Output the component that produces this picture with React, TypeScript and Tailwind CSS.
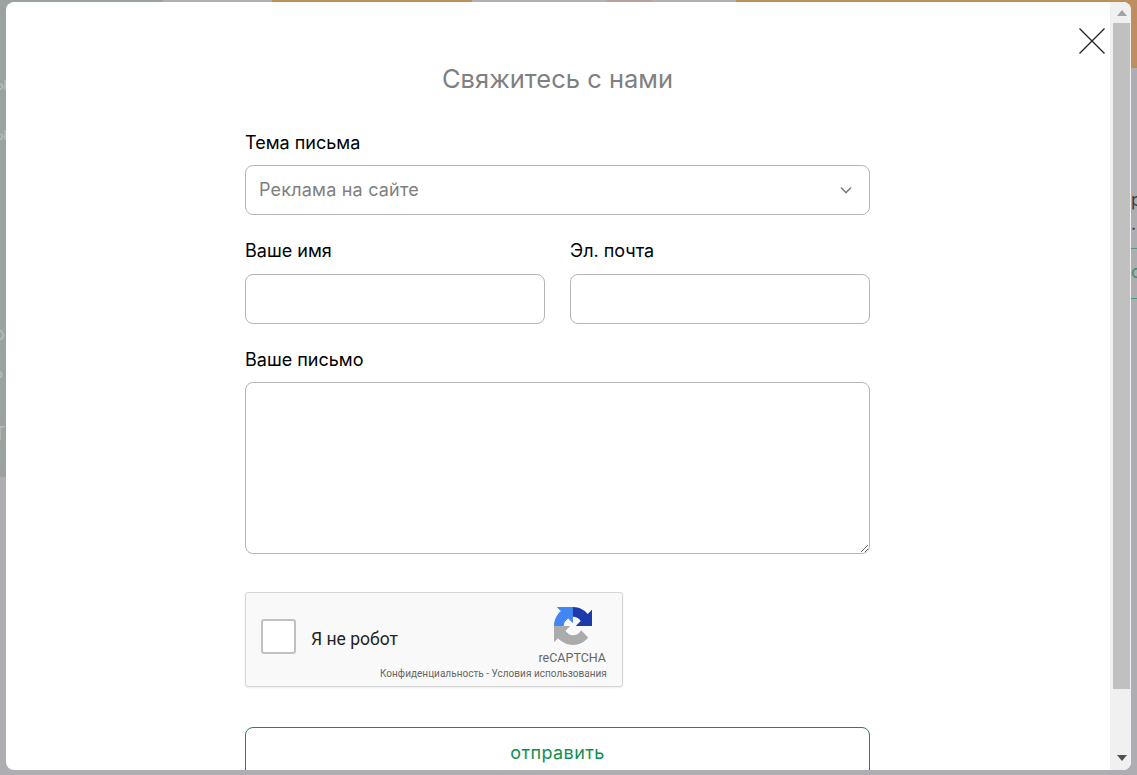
const sans = 'font-["Inter",sans-serif]';

function RecaptchaLogo() {
  return (
    <svg width="38" height="38" viewBox="0 0 64 64">
      <path d="M64 31.955l-.033-1.37V4.687l-7.16 7.16C50.948 4.674 42.033.093 32.05.093c-10.4 0-19.622 4.96-25.458 12.64l11.736 11.86a15.55 15.55 0 0 1 4.754-5.334c2.05-1.6 4.952-2.906 8.968-2.906.485 0 .86.057 1.135.163 4.976.393 9.288 3.14 11.828 7.124l-8.307 8.307 32.3.01" fill="#1c3aa9" />
      <path d="M31.862 0l-1.37.033H4.594l7.16 7.16C4.58 13.052 0 21.967 0 31.95c0 10.4 4.96 19.622 12.64 25.458L24.5 45.672a15.55 15.55 0 0 1-5.334-4.754c-1.6-2.05-2.906-4.952-2.906-8.968 0-.485.057-.86.163-1.135.393-4.976 3.14-9.288 7.124-11.828l8.307 8.307L31.862 0" fill="#4285f4" />
      <path d="M.001 31.95l.033 1.37v25.898l7.16-7.16c5.86 7.173 14.775 11.754 24.757 11.754 10.4 0 19.622-4.96 25.458-12.64l-11.736-11.86a15.55 15.55 0 0 1-4.754 5.334c-2.05 1.6-4.952 2.906-8.968 2.906-.485 0-.86-.057-1.135-.163-4.976-.393-9.288-3.14-11.828-7.124l8.307-8.307-32.3-.01" fill="#ababab" />
    </svg>
  );
}

function Scrollbar() {
  return (
    <div className="flex w-[21px] shrink-0 flex-col items-center bg-[#f0f0f0] pl-[2px]">
      <div className="flex h-[21px] w-full items-center justify-center">
        <svg width="10" height="6" viewBox="0 0 10 6"><path d="M5 0 10 6H0Z" fill="#a3a3a3" /></svg>
      </div>
      <div className="h-[666px] w-[17px] bg-[#c0c0c0]" />
      <div className="flex flex-1 items-start justify-center pt-[66px]">
        <svg width="10" height="6" viewBox="0 0 10 6"><path d="M0 0H10L5 6Z" fill="#505050" /></svg>
      </div>
    </div>
  );
}

export default function App() {
  return (
    <div className={`relative h-[775px] w-[1137px] overflow-hidden bg-[#aeadb1] ${sans}`}>
      {/* dimmed page behind the modal */}
      <div className="h-[477px] bg-[#9aa3a0]">
        <div className="flex h-[68px]">
          <div className="w-[163px] bg-[#9aa3a0]" />
          <div className="w-[109px] bg-[#b3b0b4]" />
          <div className="w-[200px] bg-[#bd8f5f]" />
          <div className="w-[135px] bg-[#b3b0b4]" />
          <div className="w-[45px] bg-[#b8a09c]" />
          <div className="w-[84px] bg-[#b3b0b4]" />
          <div className="flex-1 bg-[#bd8f5f]" />
        </div>
        <div className="flex h-[409px] justify-between">
          <div className="w-[6px] overflow-hidden whitespace-nowrap text-[18px] leading-[24px] text-[#b6bbb9]">
            <div className="mt-[4px] -ml-[6px]">ы</div>
            <div className="mt-[26px] -ml-[6px]">ы</div>
            <div className="mt-[176px] -ml-[6px]">о</div>
            <div className="mt-[21px] -ml-[6px]">?</div>
            <div className="mt-[31px] -ml-[6px]">Т</div>
          </div>
          <div className="w-[6px] overflow-hidden whitespace-nowrap bg-[#aeadb1] pt-[120px] text-[18px] leading-[24px]">
            <div className="text-[#3d3d44]">р</div>
            <div className="text-[#3d3d44]">.</div>
            <div className="mt-[12px] h-px bg-[#4f9b7f]" />
            <div className="mt-[11px] text-[#3f8f70]">с</div>
            <div className="mt-[14px] h-px bg-[#4f9b7f]" />
          </div>
        </div>
      </div>

      {/* modal */}
      <div className="absolute left-[6px] top-[2px] flex h-[768px] w-[1125px] overflow-hidden rounded-[8px] bg-white">
        <div className="relative min-w-0 flex-1 overflow-hidden">
          <button className="absolute right-[5px] top-[26px]" aria-label="Закрыть">
            <svg width="26" height="26" viewBox="0 0 26 26" className="block">
              <path d="M0.5 0.5 25.5 25.5M25.5 0.5 0.5 25.5" stroke="#222" strokeWidth="1.3" fill="none" />
            </svg>
          </button>

          <form className="ml-[239px] w-[625px] pt-[60px]">
            <h2 className="text-center text-[25.5px] leading-[34px] font-normal text-[#808080]">Свяжитесь с нами</h2>

            <label className="mt-[34px] block text-[18px] leading-[26px] text-black">Тема письма</label>
            <div className="mt-[9px] flex h-[50px] items-center justify-between rounded-[8px] border border-[#b5b5b5] pl-[13px] pr-[17px] text-[18px] tracking-[0.2px] text-[#808080]">
              <span className="mb-[2px]">Реклама на сайте</span>
              <svg width="12" height="8" viewBox="0 0 12 8"><path d="M1 1.5 6 6.5 11 1.5" stroke="#808080" strokeWidth="1.6" fill="none" /></svg>
            </div>

            <div className="mt-[23px] grid grid-cols-2 gap-[25px]">
              <div>
                <label className="block text-[18px] leading-[26px] text-black">Ваше имя</label>
                <input className="mt-[10px] block h-[50px] w-full rounded-[8px] border border-[#b5b5b5]" />
              </div>
              <div>
                <label className="block text-[18px] leading-[26px] text-black">Эл. почта</label>
                <input className="mt-[10px] block h-[50px] w-full rounded-[8px] border border-[#b5b5b5]" />
              </div>
            </div>

            <label className="mt-[23px] block text-[18px] leading-[26px] text-black">Ваше письмо</label>
            <textarea className="mt-[9px] block h-[172px] w-full resize-y rounded-[8px] border border-[#b5b5b5]" />

            <div className="relative mt-[38px] flex h-[95px] w-[378px] items-start rounded-[3px] border border-[#d6d6d6] bg-[#f9f9f9] font-['Roboto',sans-serif] shadow-[0_1px_2px_rgba(0,0,0,0.08)]">
              <div className="ml-[15px] mt-[26px] h-[35px] w-[35px] rounded-[3px] border-2 border-[#c1c1c1] bg-white" />
              <div className="ml-[15px] mt-[34px] text-[17.5px] leading-[24px] text-[#222]">Я не робот</div>
              <div className="ml-auto mr-[16px] flex flex-col items-end">
                <div className="mr-[14px] mt-[14px] flex h-[38px]"><RecaptchaLogo /></div>
                <div className="mt-[6px] text-[12.5px] leading-[14px] text-[#666]">reCAPTCHA</div>
              </div>
              <div className="absolute left-[134px] top-[74px] whitespace-nowrap text-[10px] leading-[14px] tracking-[0.03px] text-[#666]">Конфиденциальность - Условия использования</div>
            </div>

            <button type="button" className="mt-[40px] block h-[52px] w-full rounded-[8px] border border-[#1a8a5a] pb-[2px] text-[18px] tracking-[0.4px] text-[#0c9150]">отправить</button>
          </form>
        </div>
        <Scrollbar />
      </div>
    </div>
  );
}
